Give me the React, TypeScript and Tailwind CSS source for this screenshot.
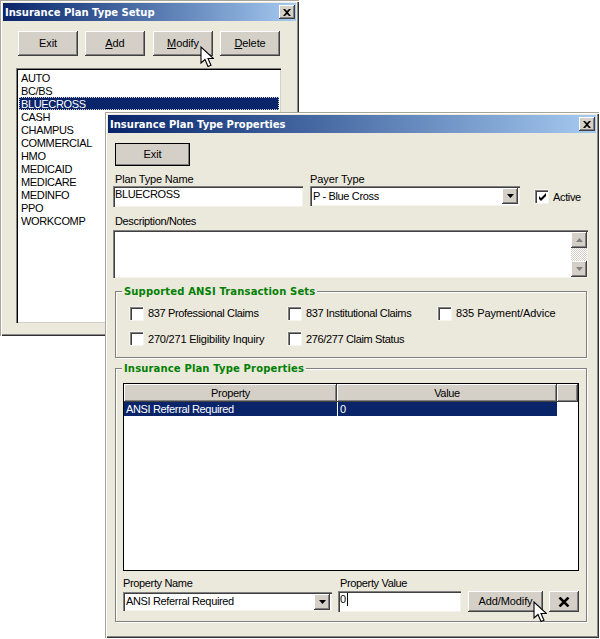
import type { ReactNode } from "react";

const raised =
  "bg-[#d4d0c8] shadow-[inset_-1px_-1px_0_#404040,inset_1px_1px_0_#fff,inset_-2px_-2px_0_#808080]";
const sunken =
  "bg-white shadow-[inset_1px_1px_0_#808080,inset_2px_2px_0_#404040,inset_-1px_-1px_0_#f4f2ea]";

const plans = [
  "AUTO",
  "BC/BS",
  "BLUECROSS",
  "CASH",
  "CHAMPUS",
  "COMMERCIAL",
  "HMO",
  "MEDICAID",
  "MEDICARE",
  "MEDINFO",
  "PPO",
  "WORKCOMP",
];

function CloseGlyph() {
  return (
    <div className={`${raised} flex h-[14px] w-[16px] items-center justify-center`}>
      <svg width="8" height="7" viewBox="0 0 8 7">
        <path d="M0 0h2l2 2 2-2h2L5 3.500 8 7H6L4 5 2 7H0l3-3.500z" fill="#000" />
      </svg>
    </div>
  );
}

function TitleBar({ title }: { title: string }) {
  return (
    <div className="flex h-[18px] items-center justify-between bg-gradient-to-r from-[#0a246a] to-[#a6caf0] pl-[2px] pr-[1px] font-['DejaVu_Sans'] text-[10px] font-bold tracking-normal text-white">
      <span className="mt-[1px]">{title}</span>
      <CloseGlyph />
    </div>
  );
}

function Btn({ label, u, className }: { label: string; u?: boolean; className: string }) {
  return (
    <div className={`${raised} flex items-center justify-center tracking-[-0.1px] ${className}`}>
      {u ? (
        <span>
          <span className="underline">{label[0]}</span>
          {label.slice(1)}
        </span>
      ) : (
        label
      )}
    </div>
  );
}

function Arrow({ dir }: { dir: "up" | "down" }) {
  return (
    <svg width="7" height="4" viewBox="0 0 7 4">
      <path d={dir === "down" ? "M0 0h7L3.500 4z" : "M0 4h7L3.500 0z"} fill="currentColor" />
    </svg>
  );
}

function Combo({ value, className, textClass }: { value: string; className: string; textClass?: string }) {
  return (
    <div className={`${sunken} flex items-center justify-between pl-[3px] pr-[2px] ${className}`}>
      <span className={textClass}>{value}</span>
      <div className={`${raised} flex h-[16px] w-[16px] items-center justify-center text-black`}>
        <Arrow dir="down" />
      </div>
    </div>
  );
}

function Check({ checked }: { checked?: boolean }) {
  return (
    <div className="flex h-[13px] w-[13px] shrink-0 items-center justify-center bg-white shadow-[inset_1px_1px_0_#808080,inset_2px_2px_0_#404040,0_0_0_0.500px_#fff]">
      {checked && (
        <svg width="9" height="8" viewBox="0 0 9 8" className="ml-[1px] mt-[1px]">
          <path d="M1 3l2 2 5-5v3L3 8 1 6z" fill="#000" />
        </svg>
      )}
    </div>
  );
}

function CheckLabel({ label, className }: { label: string; className: string }) {
  return (
    <div className={`flex items-center gap-[5px] ${className}`}>
      <Check />
      <span>{label}</span>
    </div>
  );
}

function Group({ legend, className, children }: { legend: string; className: string; children: ReactNode }) {
  return (
    <div className={`relative ml-[2px] w-[472px] border border-[#808080] shadow-[1px_1px_0_#fff,inset_1px_1px_0_#fff] ${className}`}>
      <span className="absolute -top-[7px] left-[6px] bg-[#ebe8dc] px-[2px] font-['DejaVu_Sans'] text-[10px] font-bold leading-[14px] tracking-[0.15px] text-[#008000]">
        {legend}
      </span>
      {children}
    </div>
  );
}

function Cursor({ className }: { className: string }) {
  return (
    <svg width="14" height="22" viewBox="0 0 14 22" className={`absolute ${className}`}>
      <path d="M1 1v16l4-3.500 3 7 3-1.200-3-6.800h5.500z" fill="#fff" stroke="#000" strokeWidth="1.100" />
    </svg>
  );
}

const chrome =
  "absolute bg-[#ebe8dc] p-[3px] shadow-[inset_1px_1px_0_#a8a49a,inset_2px_2px_0_#fff,inset_-1px_-1px_0_#303030,inset_-2px_-2px_0_#8a8a8a]";

function SetupWindow() {
  return (
    <div className={`${chrome} left-0 top-0 h-[336px] w-[299px]`}>
      <TitleBar title="Insurance Plan Type Setup" />
      <div className="ml-[15px] mt-[10px] flex">
        <Btn label="Exit" className="h-[25px] w-[60px]" />
        <Btn label="Add" u className="ml-[7px] h-[25px] w-[60px]" />
        <Btn label="Modify" u className="ml-[8px] h-[25px] w-[60px]" />
        <Btn label="Delete" u className="ml-[7px] h-[25px] w-[60px]" />
      </div>
      <div className="ml-[13px] mt-[12px] h-[255px] w-[265px] bg-white pb-[1px] pl-[3px] pr-[2px] pt-[3px] shadow-[inset_1px_1px_0_#808080,inset_2px_2px_0_#000,inset_-1px_-1px_0_#d4d0c8]">
        {plans.map((p) => (
          <div
            key={p}
            className={`h-[13px] pl-[2px] leading-[15px] ${
              p === "BLUECROSS" ? "bg-[#0a246a] text-white outline outline-1 outline-dotted -outline-offset-1 outline-[#d4d0c8]" : ""
            }`}
          >
            {p}
          </div>
        ))}
      </div>
    </div>
  );
}

function PropertiesWindow() {
  return (
    <div className={`${chrome} left-[105px] top-[112px] h-[526px] w-[494px]`}>
      <TitleBar title="Insurance Plan Type Properties" />
      <div className="pl-[5px]">
        <Btn
          label="Exit"
          className="ml-[2px] mt-[10px] h-[23px] w-[75px] outline outline-1 -outline-offset-1 outline-black"
        />
        <div className="mt-[7px] flex">
          <div className="w-[190px]">
            <div className="h-[13px] pl-[2px] leading-[13px] tracking-[-0.2px]">Plan Type Name</div>
            <div className={`${sunken} h-[21px] pl-[2px] pt-[2px] leading-[13px]`}>BLUECROSS</div>
          </div>
          <div className="ml-[7px] w-[210px]">
            <div className="h-[13px] leading-[13px] tracking-[-0.1px]">Payer Type</div>
            <Combo value="P - Blue Cross" className="h-[20px]" textClass="mt-[1px]" />
          </div>
          <div className="ml-[15px] mt-[17px] flex h-[13px] items-center gap-[5px]">
            <Check checked />
            <span className="mt-[1px]">Active</span>
          </div>
        </div>
        <div className="mt-[7px] h-[16px] pl-[2px] leading-[15px]">Description/Notes</div>
        <div className={`${sunken} flex h-[48px] w-[475px] justify-end pr-[1px] pt-[2px]`}>
          <div className="flex w-[16px] flex-col">
            <div className={`${raised} flex h-[16px] items-center justify-center text-[#808080]`}>
              <Arrow dir="up" />
            </div>
            <div className="h-[13px] bg-[repeating-conic-gradient(#d4d0c8_0_25%,#fff_0_50%)] bg-[length:2px_2px]" />
            <div className={`${raised} flex h-[16px] items-center justify-center text-[#808080]`}>
              <Arrow dir="down" />
            </div>
          </div>
        </div>
        <Group legend="Supported ANSI Transaction Sets" className="mt-[13px] h-[67px]">
          <div className="ml-[14px] mt-[13px] flex">
            <CheckLabel label="837 Professional Claims" className="w-[158px]" />
            <CheckLabel label="837 Institutional Claims" className="w-[150px]" />
            <CheckLabel label="835 Payment/Advice" className="tracking-[-0.07px]" />
          </div>
          <div className="ml-[14px] mt-[9px] flex">
            <CheckLabel label="270/271 Eligibility Inquiry" className="w-[158px] tracking-[-0.2px]" />
            <CheckLabel label="276/277 Claim Status" className="" />
          </div>
        </Group>
        <Group legend="Insurance Plan Type Properties" className="mt-[10px] h-[254px]">
          <div className="ml-[7px] mt-[14px] h-[188px] w-[456px] border border-black bg-white">
            <div className="flex h-[18px]">
              <div className={`${raised} flex w-[213px] items-center justify-center`}>Property</div>
              <div className={`${raised} flex w-[220px] items-center justify-center`}>Value</div>
              <div className={`${raised} flex-1`} />
            </div>
            <div className="flex h-[14px] w-[433px] bg-[#0a246a] leading-[14px] text-white">
              <div className="w-[214px] border-r border-white pl-[2px]">ANSI Referral Required</div>
              <div className="pl-[2px]">0</div>
            </div>
          </div>
          <div className="ml-[7px] mt-[6px] flex">
            <div className="w-[209px]">
              <div className="h-[15px] leading-[13px]">Property Name</div>
              <Combo value="ANSI Referral Required" className="h-[19px]" />
            </div>
            <div className="ml-[6px] w-[123px]">
              <div className="h-[14px] pl-[2px] leading-[13px]">Property Value</div>
              <div className={`${sunken} flex h-[21px] items-start pl-[2px] pt-[2px] leading-[13px]`}>
                0<span className="ml-[1px] h-[13px] w-px bg-black" />
              </div>
            </div>
            <Btn label="Add/Modify" className="ml-[7px] mt-[14px] h-[21px] w-[75px]" />
            <div className={`${raised} ml-[6px] mt-[14px] flex h-[21px] w-[30px] items-center justify-center`}>
              <svg width="12" height="10" viewBox="0 0 12 10">
                <path d="M1.500 0.500l9 9M10.500 0.500l-9 9" stroke="#000" strokeWidth="2.500" />
              </svg>
            </div>
          </div>
        </Group>
      </div>
    </div>
  );
}

export default function App() {
  return (
    <div className="relative h-[639px] w-[600px] overflow-hidden bg-white font-['Liberation_Sans',sans-serif] text-[11px] tracking-[-0.35px] text-black">
      <SetupWindow />
      <PropertiesWindow />
      <Cursor className="left-[200px] top-[46px]" />
      <Cursor className="left-[533px] top-[601px]" />
    </div>
  );
}
